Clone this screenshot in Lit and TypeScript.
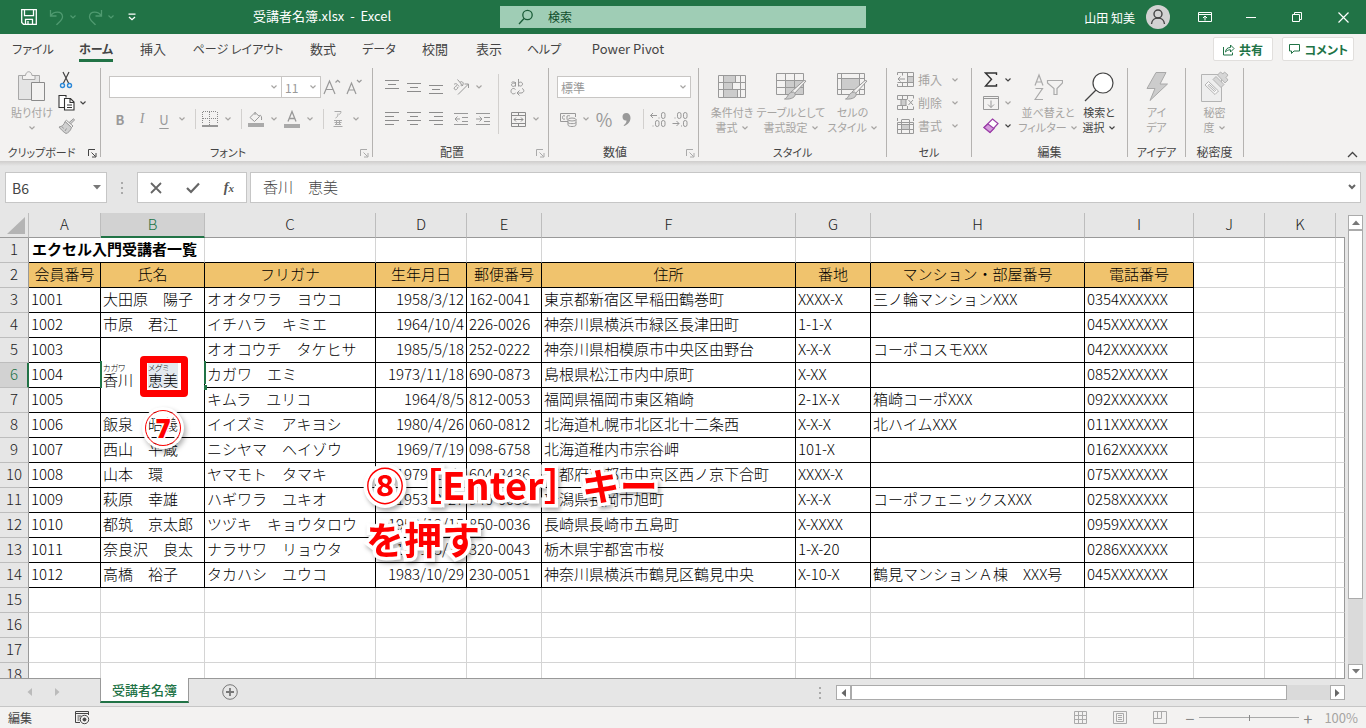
import { LitElement, html, css, nothing } from "lit";
import { customElement, property, state } from "lit/decorators.js";
import { classMap } from "lit/directives/class-map.js";

const icons: Record<string, unknown> = {
  save: html`<svg width="18" height="18" viewBox="0 0 18 18" fill="none" stroke="#fff" stroke-width="1.3"><path d="M1.7 1.7h14.6v14.6H3.5l-1.8-1.8zM4.5 1.7v6h9v-6M5.5 16.300v-5h7v5M8 13v3"/></svg>`,
  undo: html`<svg width="18" height="18" viewBox="0 0 18 18" fill="none" stroke="#4f9a70" stroke-width="1.3"><path d="M2.500 2v6h6M2.700 7.800C5.500 3 14 2.500 14.500 8.500c.3 4-4.500 6-6 8.500"/></svg>`,
  redo: html`<svg width="18" height="18" viewBox="0 0 18 18" fill="none" stroke="#4f9a70" stroke-width="1.3"><path d="M15.500 2v6h-6M15.300 7.800C12.500 3 4 2.500 3.500 8.500c-.3 4 4.500 6 6 8.500"/></svg>`,
  customize: html`<svg width="10" height="8" viewBox="0 0 10 8" fill="none" stroke="#fff" stroke-width="1.3"><path d="M1.500 1.200h7M2 4l3 2.700L8 4"/></svg>`,
  search: html`<svg width="16" height="16" viewBox="0 0 16 16" fill="none" stroke="#1a5c38" stroke-width="1.300"><circle cx="9.500" cy="6" r="4.700"/><path d="M6 9.500L1 15"/></svg>`,
  avatar: html`<svg width="24" height="24" viewBox="0 0 24 24"><circle cx="12" cy="12" r="12" fill="#d2d2d2"/><g fill="none" stroke="#444" stroke-width="1.400"><circle cx="12" cy="9" r="4"/><path d="M5.500 19c.5-8 12.500-8 13 0"/></g></svg>`,
  ribbonMode: html`<svg width="14" height="12" viewBox="0 0 14 12" fill="none" stroke="#fff"><path d="M.5 1.500h13v9H.5zM.5 3.500h13M7 9.500v-4M5 7l2-2 2 2"/></svg>`,
  minimize: html`<svg width="10" height="10" viewBox="0 0 10 10" stroke="#fff"><path d="M0 5.500h10"/></svg>`,
  restore: html`<svg width="10" height="10" viewBox="0 0 10 10" fill="none" stroke="#fff"><path d="M.5 2.500h7v7h-7zM2.500 2.500v-2h7v7h-2"/></svg>`,
  close: html`<svg width="11" height="11" viewBox="0 0 11 11" stroke="#fff" stroke-width="1.200"><path d="M.5.5l10 10M10.500.5l-10 10"/></svg>`,
  share: html`<svg width="13" height="13" viewBox="0 0 13 13" fill="none" stroke="#217346"><path d="M1.500 4v8h9V9.500M3.500 9c.3-3 2-4.500 5-4.500V2l3.500 3.500L8.500 9V6.800C6 6.800 5 7.500 3.500 9z"/></svg>`,
  comment: html`<svg width="13" height="12" viewBox="0 0 13 12" fill="none" stroke="#217346"><path d="M1.500 1.500h10v6.500H6L3.500 10.500V8h-2z"/></svg>`,
  chev: html`<svg width="8" height="6" viewBox="0 0 8 6" fill="none" stroke="currentColor" stroke-width="1.200"><path d="M1.500 1.500L4 4l2.500-2.500"/></svg>`,
  paste: html`<svg width="28" height="32" viewBox="0 0 28 32"><path d="M.5 4.500h21v24H.5z" fill="#e4e4e4" stroke="#a8a8a8"/><path d="M4.500 8.500V4.500h3c.5-5 6-5 6.500 0h3v4z" fill="#f3f2f1" stroke="#a8a8a8"/><path d="M13.500 11.500h13v18h-13z" fill="#f3f2f1" stroke="#8a8a8a"/></svg>`,
  cut: html`<svg width="16" height="18" viewBox="0 0 16 18" fill="none"><path d="M5 1l6 12M11 1L5 13" stroke="#444" stroke-width="1.200"/><circle cx="4.500" cy="14.500" r="2" stroke="#2b88d8" stroke-width="1.400"/><circle cx="11.500" cy="14.500" r="2" stroke="#2b88d8" stroke-width="1.400"/></svg>`,
  copy: html`<svg width="17" height="17" viewBox="0 0 17 17" fill="#fff" stroke="#333" stroke-width="1.100"><path d="M6 13.500H1V1.500h7v2"/><path d="M6.500 4.500h6l3.500 3.500v8H6.500zM12 4.500v4h4M9 11h5M9 13.500h5"/></svg>`,
  painter: html`<svg width="17" height="16" viewBox="0 0 17 16" fill="#d0d0d0" stroke="#999"><path d="M15.500.7l1 1.300-4 4-1.500-1.300z"/><path d="M7 3.500l1.500-1.200 6.500 5.700-1.500 1.500z" fill="#f3f2f1"/><path d="M7 3.500l6.500 6C12.500 13 10 15 8 15.500c-2.500-1.500-5-4-7-6.500 3-.5 5-2 6-5.500z"/><path d="M4 8.500l1.500 2M7 13l1.500-2.500" fill="none"/></svg>`,
  growFont: html`<svg width="18" height="18" viewBox="0 0 18 18" fill="none" stroke="#999" stroke-width="1.200"><path d="M1 16L6.500 3 12 16M3 11.500h7M12.500 4.500l2.200-2.200L17 4.500"/></svg>`,
  shrinkFont: html`<svg width="18" height="18" viewBox="0 0 18 18" fill="none" stroke="#999" stroke-width="1.200"><path d="M2 16L6.500 5 11 16M3.500 12h6M12 2l2.200 2.200L16.500 2"/></svg>`,
  borders: html`<svg width="16" height="16" viewBox="0 0 16 16" fill="none" stroke="#888"><path d="M.5 1v12M15.500 1v12M7.500 1v13M1 .5h14M1 7.500h14" stroke-dasharray="1 1"/><path d="M0 15h16" stroke="#777" stroke-width="1.500"/></svg>`,
  fill: html`<svg width="16" height="16" viewBox="0 0 16 16" fill="none" stroke="#999"><path d="M7 1.500L2 6.500l4.500 4 5-5zM7 1v3M11 5c1.500-1.500 3-.5 2.500 4"/><path d="M0 14h16" stroke="#aaa" stroke-width="4"/></svg>`,
  fontColor: html`<svg width="16" height="18" viewBox="0 0 16 18" fill="none" stroke="#999" stroke-width="1.300"><path d="M4 11.500L8 1.500l4 10M5.500 8.500h5"/><path d="M0 16h16" stroke="#aaa" stroke-width="4"/></svg>`,
  phonetic: html`<svg width="10" height="18" viewBox="0 0 10 18" fill="none" stroke="#aaa"><path d="M1.500 1.500h6.500c0 1.500-.8 2.500-2 3M5 3.500c0 2.500-.5 3.500-2.500 4.500M1 10.500h8M3.500 10.500v4M6.500 10.500v4M1.500 12.500h7M.5 16.500h9M2 14.500h6"/></svg>`,
  wrap: html`<svg width="16" height="18" viewBox="0 0 16 18" fill="none" stroke="#999"><path d="M5.500 4v4.500M5.500 6.500c0 2.500-4 2.500-4 .3s4-2 4-.8c0-2.500-3-2.500-4-1.500M8.500 1v7.500M8.500 6c0-2.500 4-2.500 4 0s-4 3-4 0M5.500 11.500c-2-2-4.500-.8-4.500 1.700s2.500 3.500 4.500 1.800M12 10.500c3 1 2 4.500-1 4.500H7.500M9.500 12.500L7 15l2.500 2.500"/></svg>`,
  orient: html`<svg width="18" height="17" viewBox="0 0 18 17" fill="none" stroke="#999"><path d="M6 15.500L16.500 5M12.500 5h4v4M2 5.500c1.500-1.500 3-1 5 2M5 6.500C3 7.500 1.500 9 2.500 10.200s3 .3 3.500-2.200M5.500.5l5.500 6.500M8 3.500c1.500-2 4 0 3 2s-2 1-2.500.5"/></svg>`,
  outdent: html`<svg width="14" height="14" viewBox="0 0 14 14" fill="none" stroke="#999"><path d="M0 1.500h14M8 5.500h6M8 9.500h6M0 12.500h14M1 7h5M3.500 4.500L1 7l2.500 2.500"/></svg>`,
  indent: html`<svg width="14" height="14" viewBox="0 0 14 14" fill="none" stroke="#999"><path d="M0 1.500h14M8 5.500h6M8 9.500h6M0 12.500h14M0 7h5.500M3.500 4.500L6 7 3.500 9.500"/></svg>`,
  merge: html`<svg width="15" height="15" viewBox="0 0 15 15" fill="none" stroke="#8c8c8c"><path d="M.5.5h14v14H.5zM.5 3.500h14M.5 11.500h14M7.500.5v3M7.500 11.500v3M3 7.500h9M5 5.500l-2 2 2 2M10 5.500l2 2-2 2"/></svg>`,
  currency: html`<svg width="17" height="15" viewBox="0 0 17 15" fill="none" stroke="#999"><path d="M8 9.500H.5v-8h15V5M5 4c-2-.8-2.500 0-2.500 1.500S3 7.500 5 7M7 7.500V4c1-.5 2-.5 3 0"/><ellipse cx="12" cy="7.500" rx="4" ry="1.500" fill="#f3f2f1"/><path d="M8 7.500v5.500c0 2 8 2 8 0V7.500M8 10.500c0 1.500 8 1.500 8 0"/></svg>`,
  comma: html`<svg width="9" height="14" viewBox="0 0 9 14" fill="#999"><path d="M1.500 13.500c2-1.500 3-3 3-5C2 9 .5 7 .5 4.800.5 2.500 2 1 4.300 1 7 1 8.500 3 8.500 6c0 3.500-2.500 6.500-6 8z"/></svg>`,
  incDec: html`<svg width="16" height="17" viewBox="0 0 16 17" fill="none" stroke="#999"><path d="M.5 4.500H7M3 2L.5 4.500 3 7M9 6.500v1"/><rect x="11.500" y="1.500" width="3.500" height="6" rx="1.700"/><rect x="5.500" y="9.500" width="3.500" height="6" rx="1.700"/><rect x="11.500" y="9.500" width="3.500" height="6" rx="1.700"/><path d="M3 14.500v1"/></svg>`,
  decDec: html`<svg width="16" height="17" viewBox="0 0 16 17" fill="none" stroke="#999"><path d="M.5 12.500H7M4.500 10L7 12.500 4.500 15M3 6.500v1M9.500 14.500v1"/><rect x="5.500" y="1.500" width="3.500" height="6" rx="1.700"/><rect x="11.500" y="1.500" width="3.500" height="6" rx="1.700"/><rect x="11.500" y="9.500" width="3.500" height="6" rx="1.700"/></svg>`,
  condFormat: html`<svg width="28" height="23" viewBox="0 0 28 23" fill="none" stroke="#999"><path d="M6 1h12v6H6zM6 8h8v6H6zM6 15h14v7H6z" fill="#ccc" stroke="none"/><path d="M.5.5h27v22H.5zM.5 7.500h27M.5 14.500h27M5.500.5v22M22.500.5v22M17.500.5v7M14.500 7.500v7M19.500 14.500v8"/></svg>`,
  tableFormat: html`<svg width="31" height="28" viewBox="0 0 31 28" fill="none" stroke="#999"><path d="M10 7.500h17v14H10z" fill="#ccc" stroke="none"/><path d="M.5.5h27v21H.5zM.5 7.500h27M.5 14.500h27M9.500.5v21M18.500.5v21"/><path d="M30 8L18 21l-3-2L28 7.500z" fill="#f3f2f1"/><path d="M17.500 19c4 2 1 8-9 7 4-1.500 3-7 9-7z" fill="#ccc"/></svg>`,
  cellStyle: html`<svg width="31" height="28" viewBox="0 0 31 28" fill="none" stroke="#999"><path d="M5 5h18v12H5z" fill="#ccc" stroke="none"/><path d="M.5.5h27v21H.5zM.5 5.500h27M.5 16.500h27M4.500.5v21M22.500.5v21"/><path d="M30 8L18 21l-3-2L28 7.500z" fill="#f3f2f1"/><path d="M17.500 19c4 2 1 8-9 7 4-1.500 3-7 9-7z" fill="#ccc"/></svg>`,
  cellInsert: html`<svg width="17" height="15" viewBox="0 0 17 15" fill="none" stroke="#999"><path d="M11 5h5v5h-5z" fill="#ccc" stroke="none"/><path d="M.5 3V.5h16v14H.5V12M5.500.5v3M10.500.5v14M.5 10.500h16M10.500 4.500h6M5.500 10.500v4M1 7h7M3.500 4.500L1 7l2.500 2.500"/></svg>`,
  cellDelete: html`<svg width="17" height="15" viewBox="0 0 17 15" fill="none" stroke="#999"><path d="M4 4.500h5v6H4z" fill="#ccc"/><path d="M10 4.500H.5v-4h16v3M5.500.5v4M10.500.5v4M.5 10.500h9M.5 10.500v4h16v-3M5.500 10.500v4M10.500 11v3.500M11.500 5l4.500 5M16 5l-4.500 5"/></svg>`,
  cellFormat: html`<svg width="17" height="16" viewBox="0 0 17 16" fill="none" stroke="#999"><path d="M5 6h7v5H5z" fill="#ccc" stroke="none"/><path d="M.5 4.500h16v11H.5zM4.500 2v13.500M12.500 2v13.500M4.500 1.500h8M.5 6.500h16M.5 11.500h16M.5 0v3M16.500 0v3"/></svg>`,
  sigma: html`<svg width="14" height="15" viewBox="0 0 14 15" fill="none" stroke="#333" stroke-width="1.400"><path d="M12.500 3V1H1.500L7.500 7.300 1.500 14h11v-2"/></svg>`,
  fillDown: html`<svg width="16" height="14" viewBox="0 0 16 14" fill="none" stroke="#999"><path d="M.5.5h15v13H.5zM.5 2.500h15M8 4.500v7M5 8.500l3 3 3-3"/></svg>`,
  eraser: html`<svg width="16" height="16" viewBox="0 0 16 16" stroke="#9b3fa8" stroke-width="1.200"><path d="M9.500 1l5.500 4.500L7 14.500 1 9.500z" fill="#fff"/><path d="M5 6l6 4.500-4 4-6-5z" fill="#d59bdc"/></svg>`,
  sort: html`<svg width="29" height="28" viewBox="0 0 29 28" fill="none" stroke="#aaa" stroke-width="1.200"><path d="M1 12.500L5 2l4 10.500M2.500 9h5M1.500 15.500h7L1 26.500h8M13.500 7.500h15v2.500l-5.500 5.500V21.500h-3v-6L13.500 10z"/></svg>`,
  find: html`<svg width="30" height="30" viewBox="0 0 30 30" stroke="#444" stroke-width="1.200"><circle cx="19" cy="11" r="10" fill="#fff"/><path d="M12 18L1 29"/></svg>`,
  bolt: html`<svg width="22" height="29" viewBox="0 0 22 29" fill="#ccc" stroke="#a8a8a8"><path d="M10 .5h10L14 12h7.500L4 28.500 9 16.500H1z"/></svg>`,
  secret: html`<svg width="28" height="31" viewBox="0 0 28 31" fill="#eee" stroke="#b4b4b4"><path d="M.5 3.500h20v27H.5z"/><path d="M4 14l3.500-3.500 10 9.500-3.500 3.500zM7 14.500l6.500 6 1.200-1.200-6.500-6z" fill="#f8f8f8"/><path d="M12 8.500l3-3 8 8-3 3zM16.500 4l3-3 2.500 2 1.500-2 3.500 3-2 2.500 2 2.500-3 3z" fill="#d6d6d6"/></svg>`,
  launcher: html`<svg width="9" height="9" viewBox="0 0 9 9" fill="none" stroke="currentColor"><path d="M.5 7V.5H7M3.500 3.500l4 4M8 4v4H4"/></svg>`,
  collapse: html`<svg width="11" height="7" viewBox="0 0 11 7" fill="none" stroke="#444" stroke-width="1.300"><path d="M1 6l4.500-4.500L10 6"/></svg>`,
  cancel: html`<svg width="12" height="12" viewBox="0 0 12 12" stroke="#666" stroke-width="1.800"><path d="M1 1l10 10M11 1L1 11"/></svg>`,
  enter: html`<svg width="14" height="12" viewBox="0 0 14 12" fill="none" stroke="#666" stroke-width="2.200"><path d="M1 6l4 4 8-8.500"/></svg>`,
  down: html`<svg width="8" height="5" viewBox="0 0 8 5" fill="#777"><path d="M0 0h8L4 4.500z"/></svg>`,
  up: html`<svg width="8" height="5" viewBox="0 0 8 5" fill="#777"><path d="M0 5h8L4 .5z"/></svg>`,
  left: html`<svg width="5" height="8" viewBox="0 0 5 8" fill="currentColor"><path d="M5 0v8L.5 4z"/></svg>`,
  right: html`<svg width="5" height="8" viewBox="0 0 5 8" fill="currentColor"><path d="M0 0v8l4.500-4z"/></svg>`,
  expand: html`<svg width="8" height="6" viewBox="0 0 8 6" fill="none" stroke="#666" stroke-width="2"><path d="M1 1l3 3 3-3"/></svg>`,
  dots: html`<svg width="2" height="12" viewBox="0 0 2 12" fill="#aaa"><path d="M0 0h2v2H0zM0 5h2v2H0zM0 10h2v2H0z"/></svg>`,
  plus: html`<svg width="16" height="16" viewBox="0 0 16 16" fill="none" stroke="#777"><circle cx="8" cy="8" r="7.300"/><path d="M4 8h8M8 4v8" stroke-width="1.800"/></svg>`,
  macro: html`<svg width="15" height="14" viewBox="0 0 15 14" fill="none" stroke="#444"><path d="M5 11.500H.5V.5h13V4M.5 2.500h13M2.500 5h4M2.500 7h2M2.500 9h2"/><circle cx="9.500" cy="8.500" r="4.200"/><circle cx="9.500" cy="8.500" r="1.500" fill="#444"/></svg>`,
  viewNormal: html`<svg width="13" height="13" viewBox="0 0 13 13" fill="none" stroke="#aaa"><path d="M.5.5h12v12H.5zM.5 4.500h12M.5 8.500h12M4.500.5v12M8.500.5v12"/></svg>`,
  viewPage: html`<svg width="14" height="13" viewBox="0 0 14 13" fill="none" stroke="#aaa"><path d="M.5.5h13v12H.5zM3.500 2.500h7v8h-7zM5 4.500h4M5 6.500h4M5 8.500h4"/></svg>`,
  viewBreak: html`<svg width="14" height="13" viewBox="0 0 14 13" fill="none" stroke="#aaa"><path d="M.5.5h13v12H.5zM.5 7.500h8V.5M4.500.5v7"/></svg>`,
};

const alignIcon = (rows: [number, number][], top: number) => html`<svg width="14" height="14" viewBox="0 0 14 14" stroke="#8c8c8c">
  ${rows.map(([x, w], i) => html`<svg><path d="M${x} ${top + i * 4 + 0.5}h${w}"/></svg>`)}
</svg>`;

const F: [number, number] = [0, 14];
const alignTop = alignIcon([F, [3, 8], F], 0);
const alignMiddle = alignIcon([F, [3, 8], F], 3);
const alignBottom = alignIcon([F, [3, 8], F], 5);
const alignLeft = alignIcon([F, [0, 9], F, [0, 9]], 0);
const alignCenter = alignIcon([F, [3, 8], F, [3, 8]], 0);
const alignRight = alignIcon([F, [5, 9], F, [5, 9]], 0);

const isKana = (s: string) => /^[\u30a0-\u30ff ]+$/.test(s);

const tool = (icon: unknown, label: string) => html`<button class="tool" aria-label=${label}>${icon}</button>`;
const drop = (label: string, dark = false) =>
  html`<button class=${classMap({ drop: true, dark })} aria-label=${`${label}のオプション`}>${icons.chev}</button>`;
const big = (icon: string, lines: string[], o: { chev?: boolean; below?: boolean; dark?: boolean } = {}) => html`
  <button class=${classMap({ big: true, dark: !!o.dark })}>
    <span class="pic">${icons[icon]}</span>
    ${lines.map((l, i) => html`<span class="line">${l}${o.chev && i === lines.length - 1 ? icons.chev : nothing}</span>`)}
    ${o.below ? html`<span class="line tip">${icons.chev}</span>` : nothing}
  </button>`;

const group = (name: string, cls: string, body: unknown, launcher = "") => html`
  <section class="group ${cls}" aria-label=${name}>
    <div class="body">${body}</div>
    <div class="caption">
      <span class=${classMap({ kana: isKana(name) })}>${name}</span>
      ${launcher ? html`<button class="launch ${launcher}" aria-label="${name}の設定">${icons.launcher}</button>` : nothing}
    </div>
  </section>
  <i class="rule"></i>`;

@customElement("excel-title-bar")
class TitleBar extends LitElement {
  static styles = css`
    :host { display: grid; grid-template-columns: 500fr 366fr 500fr; align-items: center; height: 34px; background: #217346; color: #fff; font-size: 12px; }
    .left, .right { display: flex; align-items: center; }
    .quick { display: flex; align-items: center; padding-left: 18px; width: 253px; box-sizing: border-box; }
    button { border: 0; padding: 0; background: none; color: inherit; font: inherit; display: flex; align-items: center; justify-content: center; height: 24px; }
    .ic { width: 22px; }
    .chev { width: 10px; color: #4f9a70; }
    .gap { margin-left: 6px; }
    .more { width: 20px; }
    h1 { margin: 0; padding-bottom: 3px; font-size: 13px; font-weight: 400; white-space: pre; }
    label { display: flex; align-items: center; gap: 14px; height: 22px; padding-left: 18px; background: #9fcdb5; }
    input { flex: 1; min-width: 0; border: 0; padding: 0 0 2px; background: none; font: inherit; color: #0f4d2b; outline: none; }
    input::placeholder { color: #0f4d2b; opacity: 1; }
    .right { justify-content: flex-end; }
    .user { gap: 11px; margin-right: 12px; }
    .win { width: 46px; height: 34px; }
  `;
  render() {
    return html`
      <div class="left">
        <div class="quick">
          <button class="ic" aria-label="上書き保存">${icons.save}</button>
          <button class="ic gap" aria-label="元に戻す">${icons.undo}</button>
          <button class="chev" aria-label="元に戻す履歴">${icons.chev}</button>
          <button class="ic gap" aria-label="やり直し">${icons.redo}</button>
          <button class="chev" aria-label="やり直し履歴">${icons.chev}</button>
          <button class="more gap" aria-label="カスタマイズ">${icons.customize}</button>
        </div>
        <h1>受講者名簿.xlsx  -  Excel</h1>
      </div>
      <label>${icons.search}<input type="text" placeholder="検索" aria-label="検索" /></label>
      <div class="right">
        <button class="user">山田 知美 ${icons.avatar}</button>
        <button class="win" aria-label="リボンの表示オプション">${icons.ribbonMode}</button>
        <button class="win" aria-label="最小化">${icons.minimize}</button>
        <button class="win" aria-label="元のサイズ">${icons.restore}</button>
        <button class="win" aria-label="閉じる">${icons.close}</button>
      </div>`;
  }
}

@customElement("excel-ribbon")
class Ribbon extends LitElement {
  @state() private active = "ホーム";

  static styles = css`
    :host { display: block; background: #f3f2f1; color: #444; font-size: 12px; font-feature-settings: "palt"; }
    button { border: 0; padding: 0; background: none; font: inherit; color: inherit; white-space: nowrap; }
    .bar { display: flex; justify-content: space-between; height: 32px; }
    .tabs { display: grid; grid-template-columns: 66px 60px 54px 116px 54px 58px 54px 54px 56px 112px; }
    .tab { font-size: 13px; display: flex; justify-content: center; padding-top: 5px; }
    .tab.kana { font-size: 12px; }
    .tab span { line-height: 20px; border-bottom: 3px solid transparent; height: 20px; }
    .tab.on span { font-weight: 700; border-color: #217346; }
    .acts { display: flex; gap: 9px; padding: 3px 12px 0 0; }
    .act { display: flex; align-items: center; justify-content: center; gap: 4px; height: 24px; min-width: 60px; padding: 0 5px; background: #fff; border: 1px solid #e1dfdd; border-radius: 2px; color: #217346; font-weight: 700; font-size: 12px; }
    .groups { display: flex; align-items: flex-start; height: 95px; padding-top: 2px; box-sizing: border-box; }
    .rule { width: 1px; height: 89px; background: #b5b3b1; flex: none; }
    .group { display: flex; flex-direction: column; flex: none; box-sizing: border-box; }
    .body { display: flex; height: 76px; color: #a6a4a2; }
    .caption { position: relative; height: 16px; line-height: 16px; text-align: center; }
    .caption .kana { font-size: 11px; }
    .launch { position: absolute; right: 2px; top: 4px; display: flex; padding: 1px; }
    .launch.dim { color: #aaa; }
    .clip { width: 100px; }
    .font { width: 271px; }
    .place { width: 175px; }
    .num { width: 149px; }
    .clip .caption, .font .caption, .place .caption, .num .caption { padding-right: 17px; }
    .style { width: 187px; }
    .cell { width: 84px; }
    .edit { width: 155px; }
    .idea { width: 57px; }
    .rows { display: flex; flex-direction: column; gap: 10px; padding: 8px 0 0 8px; }
    .row, .mini { display: flex; align-items: center; }
    .row { height: 22px; }
    .stack { display: flex; flex-direction: column; }
    .mini { height: 23px; gap: 3px; }
    .mini .tool { width: 20px; }
    .tool { width: 22px; height: 22px; display: flex; align-items: center; justify-content: center; color: #999; }
    .drop { width: 14px; height: 22px; display: flex; align-items: center; justify-content: center; color: #a6a4a2; }
    .dark { color: #444; }
    .sep { width: 1px; height: 20px; margin: 0 3px 0 6px; background: #d2d0ce; }
    .tall { width: 1px; height: 60px; margin: 6px 0 0 4px; background: #d2d0ce; }
    .off { margin-left: 3px; }
    .pick { display: grid; align-items: center; }
    .pick > * { grid-area: 1 / 1; }
    .pick svg { justify-self: end; margin-right: 4px; pointer-events: none; }
    select { appearance: none; width: 100%; height: 22px; border: 1px solid #c8c6c4; border-radius: 0; background: #fff; padding: 0 3px; color: #999; font: inherit; font-size: 12px; opacity: 1; }
    .face { width: 173px; }
    .size { width: 40px; margin-left: -1px; }
    .fmt { width: 134px; }
    .bold { font-weight: 700; font-size: 13px; }
    .ital { font: italic 14px "Liberation Serif", serif; }
    .under { font-size: 13px; text-decoration: underline; text-underline-offset: 3px; }
    .glyph { font-size: 18px; }
    .big { display: flex; flex-direction: column; align-items: center; height: 68px; font-size: 11px; }
    .pic { height: 37px; display: flex; align-items: center; justify-content: center; flex: none; }
    .line { line-height: 15px; display: flex; align-items: center; gap: 3px; }
    .tip { height: 15px; }
    .clip .big { width: 48px; margin-left: 8px; }
    .clip .stack { width: 42px; }
    .clip .mini { gap: 0; }
    .style .body { padding-left: 7px; display: grid; grid-template-columns: 52px 66px 57px; }
    .cell .body { padding-left: 8px; }
    .cell .mini .drop { margin-left: 3px; }
    .edit .stack { width: 47px; padding-left: 9px; box-sizing: border-box; }
    .edit .mini { gap: 0; }
    .edit .body { display: grid; grid-template-columns: 47px 58px 44px; }
    .idea .body { justify-content: center; }
    .fold { margin: 83px 8px 0 auto; display: flex; }
    .shade { height: 5px; background: linear-gradient(#cfcdcc, #e6e6e6); }
  `;

  render() {
    const tabs = ["ファイル", "ホーム", "挿入", "ページ レイアウト", "数式", "データ", "校閲", "表示", "ヘルプ", "Power Pivot"];
    const cellRow = (icon: string, name: string) => html`<div class="mini">${tool(icons[icon], name)}<span>${name}</span>${drop(name)}</div>`;
    return html`
      <nav class="bar">
        <div class="tabs">
          ${tabs.map((t) => html`<button class=${classMap({ tab: true, kana: isKana(t), on: t === this.active })} @click=${() => (this.active = t)}><span>${t}</span></button>`)}
        </div>
        <div class="acts">
          <button class="act">${icons.share}共有</button>
          <button class="act">${icons.comment}コメント</button>
        </div>
      </nav>
      <div class="groups">
        ${group("クリップボード", "clip", html`
          ${big("paste", ["貼り付け"], { below: true })}
          <div class="stack">
            <div class="mini">${tool(icons.cut, "切り取り")}</div>
            <div class="mini">${tool(icons.copy, "コピー")}${drop("コピー", true)}</div>
            <div class="mini">${tool(icons.painter, "書式のコピー")}</div>
          </div>`, "lit")}
        ${group("フォント", "font", html`
          <div class="rows">
            <div class="row">
              <div class="pick face"><select aria-label="フォント名"><option></option></select>${icons.chev}</div>
              <div class="pick size"><select aria-label="フォント サイズ"><option>11</option></select>${icons.chev}</div>
              ${tool(icons.growFont, "フォント サイズの拡大")}${tool(icons.shrinkFont, "フォント サイズの縮小")}
            </div>
            <div class="row">
              <button class="tool bold">B</button><button class="tool ital">I</button><button class="tool under">U</button>${drop("下線")}
              <i class="sep"></i>${tool(icons.borders, "罫線")}${drop("罫線")}
              <i class="sep"></i>${tool(icons.fill, "塗りつぶし")}${drop("塗りつぶし")}${tool(icons.fontColor, "フォントの色")}${drop("フォントの色")}
              <i class="sep"></i>${tool(icons.phonetic, "ふりがな")}${drop("ふりがな")}
            </div>
          </div>`, "dim")}
        ${group("配置", "place", html`
          <div class="rows">
            <div class="row">${tool(alignTop, "上揃え")}${tool(alignMiddle, "上下中央")}${tool(alignBottom, "下揃え")}<span class="off">${tool(icons.orient, "方向")}</span>${drop("方向")}</div>
            <div class="row">${tool(alignLeft, "左揃え")}${tool(alignCenter, "中央揃え")}${tool(alignRight, "右揃え")}<span class="off">${tool(icons.outdent, "インデントを減らす")}</span>${tool(icons.indent, "インデントを増やす")}</div>
          </div>
          <i class="tall"></i>
          <div class="rows">
            <div class="row">${tool(icons.wrap, "折り返し")}</div>
            <div class="row">${tool(icons.merge, "セルの結合")}${drop("セルの結合")}</div>
          </div>`, "dim")}
        ${group("数値", "num", html`
          <div class="rows">
            <div class="row"><div class="pick fmt"><select aria-label="表示形式"><option>標準</option></select>${icons.chev}</div></div>
            <div class="row">${tool(icons.currency, "通貨")}${drop("通貨")}<button class="tool glyph">%</button>${tool(icons.comma, "桁区切り")}<i class="sep"></i>${tool(icons.incDec, "小数点以下を増やす")}${tool(icons.decDec, "小数点以下を減らす")}</div>
          </div>`, "dim")}
        ${group("スタイル", "style", html`
          ${big("condFormat", ["条件付き", "書式"], { chev: true })}
          ${big("tableFormat", ["テーブルとして", "書式設定"], { chev: true })}
          ${big("cellStyle", ["セルの", "スタイル"], { chev: true })}`)}
        ${group("セル", "cell", html`
          <div class="stack">${cellRow("cellInsert", "挿入")}${cellRow("cellDelete", "削除")}${cellRow("cellFormat", "書式")}</div>`)}
        ${group("編集", "edit", html`
          <div class="stack">
            <div class="mini">${tool(icons.sigma, "合計")}${drop("合計", true)}</div>
            <div class="mini">${tool(icons.fillDown, "フィル")}${drop("フィル")}</div>
            <div class="mini">${tool(icons.eraser, "クリア")}${drop("クリア", true)}</div>
          </div>
          ${big("sort", ["並べ替えと", "フィルター"], { chev: true })}
          ${big("find", ["検索と", "選択"], { chev: true, dark: true })}`)}
        ${group("アイデア", "idea", big("bolt", ["アイ", "デア"]))}
        ${group("秘密度", "idea", big("secret", ["秘密", "度"], { chev: true }))}
        <button class="fold" aria-label="リボンを折りたたむ">${icons.collapse}</button>
      </div>
      <div class="shade"></div>`;
  }
}

@customElement("excel-formula-bar")
class FormulaBar extends LitElement {
  @property() cell = "";
  @property() value = "";
  static styles = css`
    :host { display: flex; padding: 6px 5px 10px; height: 31px; background: #e6e6e6; }
    .box { display: flex; align-items: center; background: #fff; border: 1px solid #c6c6c6; box-sizing: border-box; }
    .name { width: 102px; padding: 0 5px 0 6px; }
    input { border: 0; padding: 0; background: none; outline: none; min-width: 0; flex: 1; font: inherit; color: #444; }
    .name input { font-size: 14px; }
    .grip { width: 30px; display: flex; align-items: center; justify-content: center; }
    .acts { width: 110px; justify-content: space-around; }
    button { border: 0; padding: 0; background: none; display: flex; color: #555; }
    .fx { font: italic 700 14px/20px "Liberation Serif", serif; }
    .fx small { font-size: 11px; }
    .text { flex: 1; margin-left: 3px; padding: 0 4px 2px 12px; }
    .text input { font-size: 15px; font-weight: 300; }
  `;
  render() {
    return html`
      <div class="box name"><input aria-label="名前ボックス" .value=${this.cell} />${icons.down}</div>
      <div class="grip">${icons.dots}</div>
      <div class="box acts">
        <button aria-label="キャンセル">${icons.cancel}</button>
        <button aria-label="入力">${icons.enter}</button>
        <button class="fx" aria-label="関数の挿入">f<small>x</small></button>
      </div>
      <div class="box text"><input aria-label="数式バー" .value=${this.value} /><button aria-label="数式バーの展開">${icons.expand}</button></div>`;
  }
}

const columns: [string, number][] = [["A", 72], ["B", 104], ["C", 171], ["D", 91], ["E", 75], ["F", 254], ["G", 75], ["H", 214], ["I", 109], ["J", 71], ["K", 71]];
const headings = ["会員番号", "氏名", "フリガナ", "生年月日", "郵便番号", "住所", "番地", "マンション・部屋番号", "電話番号"];
const members: string[][] = [
  ["1001", "大田原　陽子", "オオタワラ　ヨウコ", "1958/3/12", "162-0041", "東京都新宿区早稲田鶴巻町", "XXXX-X", "三ノ輪マンションXXX", "0354XXXXXX"],
  ["1002", "市原　君江", "イチハラ　キミエ", "1964/10/4", "226-0026", "神奈川県横浜市緑区長津田町", "1-1-X", "", "045XXXXXXX"],
  ["1003", "", "オオコウチ　タケヒサ", "1985/5/18", "252-0222", "神奈川県相模原市中央区由野台", "X-X-X", "コーポコスモXXX", "042XXXXXXX"],
  ["1004", "", "カガワ　エミ", "1973/11/18", "690-0873", "島根県松江市内中原町", "X-XX", "", "0852XXXXXX"],
  ["1005", "", "キムラ　ユリコ", "1964/8/5", "812-0053", "福岡県福岡市東区箱崎", "2-1X-X", "箱崎コーポXXX", "092XXXXXXX"],
  ["1006", "飯泉　昭義", "イイズミ　アキヨシ", "1980/4/26", "060-0812", "北海道札幌市北区北十二条西", "X-X-X", "北ハイムXXX", "011XXXXXXX"],
  ["1007", "西山　平蔵", "ニシヤマ　ヘイゾウ", "1969/7/19", "098-6758", "北海道稚内市宗谷岬", "101-X", "", "0162XXXXXX"],
  ["1008", "山本　環", "ヤマモト　タマキ", "1979/11/1", "604-8436", "京都府京都市中京区西ノ京下合町", "XXXX-X", "", "075XXXXXXX"],
  ["1009", "萩原　幸雄", "ハギワラ　ユキオ", "1953/2/27", "940-0035", "新潟県長岡市旭町", "X-X-X", "コーポフェニックスXXX", "0258XXXXXX"],
  ["1010", "都筑　京太郎", "ツヅキ　キョウタロウ", "1952/12/15", "850-0036", "長崎県長崎市五島町", "X-XXXX", "", "0959XXXXXX"],
  ["1011", "奈良沢　良太", "ナラサワ　リョウタ", "1971/5/14", "320-0043", "栃木県宇都宮市桜", "1-X-20", "", "0286XXXXXX"],
  ["1012", "高橋　裕子", "タカハシ　ユウコ", "1983/10/29", "230-0051", "神奈川県横浜市鶴見区鶴見中央", "X-10-X", "鶴見マンションＡ棟　XXX号", "045XXXXXXX"],
];

@customElement("excel-sheet")
class Sheet extends LitElement {
  static styles = css`
    :host { display: flex; flex: 1; min-height: 0; background: #e6e6e6; }
    .view { position: relative; flex: 1; min-width: 0; overflow: hidden; border-bottom: 1px solid #999; }
    table { table-layout: fixed; width: 100%; border-collapse: separate; border-spacing: 0; font-size: 15px; color: #000; font-weight: 300; }
    th, td { box-sizing: border-box; height: 25px; line-height: 22px; padding: 0 2px 2px; border: 0 solid #d4d4d4; border-width: 0 1px 1px 0; white-space: nowrap; overflow: hidden; }
    td { background: #fff; text-align: left; }
    th { font-weight: 300; text-align: center; background: #e6e6e6; color: #222; }
    thead th { border-right-color: #bdbdbd; border-bottom-color: #999; }
    thead th:last-child { border-right: 0; }
    tbody th { border-right-color: #999; border-bottom-color: #bdbdbd; }
    tbody td:last-child { border-right-color: #999; }
    thead .corner { padding: 0 3px 3px 0; line-height: 0; text-align: right; vertical-align: bottom; }
    thead .sel { background: #d2d2d2; color: #217346; border-bottom: 2px solid #217346; padding-bottom: 1px; }
    tbody .sel { background: #d2d2d2; color: #217346; border-right: 2px solid #217346; padding-right: 1px; }
    .title { font-weight: 700; padding-left: 3px; border-bottom-color: #000; }
    .under { border-bottom-color: #000; }
    .data { border-color: #000; }
    .head { background: #f0c36d; text-align: center; }
    .date { text-align: right; }
    .editing { position: relative; overflow: visible; }
    .edit { display: flex; gap: 15px; padding-top: 2px; }
    .part { display: flex; flex-direction: column; }
    .part rt { display: block; font-size: 8px; line-height: 9px; font-feature-settings: "palt"; }
    .part ruby { display: flex; flex-direction: column-reverse; line-height: 16px; }
    .part.mark { background: #e3e9ef; }
    .edge { position: absolute; width: 2px; top: 23px; height: 27px; background: #217346; }
    .edge.w { left: -1px; }
    .edge.e { right: -2px; height: 23px; }
    .knob { position: absolute; right: -3px; top: 47px; width: 3px; height: 5px; background: #217346; }
    .scroll { width: 21px; padding: 2px 3px 0; box-sizing: border-box; display: flex; flex-direction: column; }
    button { box-sizing: border-box; width: 15px; height: 15px; border: 1px solid #ababab; padding: 0; background: #fff; display: flex; align-items: center; justify-content: center; flex: none; }
    .track { flex: 1; background: #dadada; }
    .thumb { box-sizing: border-box; height: 85%; border: 1px solid #ababab; background: #fff; }
  `;

  private cell(row: string[], r: number, c: number) {
    if (c === 1 && (r === 3 || r === 4)) return nothing;
    if (c === 1 && r === 2)
      return html`<td class="data editing" rowspan="3">
        <div class="edit">
          <span class="part"><ruby>香川<rt>カガワ</rt></ruby></span>
          <span class="part mark"><ruby>恵美<rt>メグミ</rt></ruby></span>
        </div>
        <i class="edge w"></i><i class="edge e"></i><i class="knob"></i>
      </td>`;
    return html`<td class=${classMap({ data: true, date: c === 3 })}>${row[c]}</td>`;
  }

  render() {
    const blanks = html`<td></td><td></td><td></td>`;
    return html`
      <div class="view">
        <table>
          <colgroup>
            <col width="29" />${columns.map(([, w]) => html`<col width=${w} />`)}<col />
          </colgroup>
          <thead>
            <tr>
              <th class="corner"><svg width="18" height="17" viewBox="0 0 18 17"><path d="M18 0v17H0z" fill="#b4b4b4" /></svg></th>
              ${columns.map(([n]) => html`<th scope="col" class=${classMap({ sel: n === "B" })}>${n}</th>`)}<th></th>
            </tr>
          </thead>
          <tbody>
            <tr><th scope="row">1</th><td class="title" colspan="2">エクセル入門受講者一覧</td>${columns.slice(2, 9).map(() => html`<td class="under"></td>`)}${blanks}</tr>
            <tr><th scope="row">2</th>${headings.map((h) => html`<td class="data head">${h}</td>`)}${blanks}</tr>
            ${members.map((m, r) => html`<tr><th scope="row" class=${classMap({ sel: r === 3 })}>${r + 3}</th>${m.map((_, c) => this.cell(m, r, c))}${blanks}</tr>`)}
            ${[15, 16, 17, 18].map((n) => html`<tr><th scope="row">${n}</th>${columns.map(() => html`<td></td>`)}<td></td></tr>`)}
          </tbody>
        </table>
      </div>
      <div class="scroll">
        <button aria-label="上へ">${icons.up}</button>
        <div class="track"><div class="thumb"></div></div>
        <button aria-label="下へ">${icons.down}</button>
      </div>`;
  }
}

@customElement("excel-footer")
class Footer extends LitElement {
  static styles = css`
    :host { display: block; font-size: 12px; color: #444; }
    button { border: 0; padding: 0; background: none; font: inherit; display: flex; align-items: center; justify-content: center; }
    .sheets { display: flex; align-items: flex-start; height: 27px; background: #e6e6e6; }
    .nav { display: flex; width: 100px; height: 26px; padding-left: 15px; box-sizing: border-box; color: #bbb; }
    .nav button { width: 28px; color: inherit; }
    .tab { position: relative; margin-top: -1px; height: 25px; padding: 0 11px; background: #fff; border: 1px solid #999; border-width: 0 1px 0 1px; border-bottom: 2px solid #217346; color: #217346; font-size: 13px; font-weight: 500; }
    .add { margin-left: 33px; height: 26px; }
    .hscroll { margin: 6px 21px 0 auto; display: flex; width: 526px; height: 15px; }
    .grip { display: flex; align-items: center; width: 17px; }
    .arrow { box-sizing: border-box; width: 15px; height: 15px; border: 1px solid #ababab; background: #fff; color: #666; flex: none; }
    .track { flex: 1; background: #dadada; }
    .thumb { box-sizing: border-box; width: 91%; height: 15px; border: 1px solid #ababab; background: #fff; }
    .status { display: flex; align-items: center; height: 21px; padding: 0 8px; border-top: 1px solid #c6c6c6; background: #f3f2f1; }
    .macro { margin-left: 43px; }
    .views { display: flex; gap: 26px; margin-left: auto; }
    .zoom { display: flex; align-items: center; margin-left: 18px; color: #a6a4a2; }
    .zoom output { width: 34px; margin-left: 11px; text-align: right; font-size: 13px; color: #a6a4a2; }
    .step { width: 10px; height: 16px; color: #888; font-size: 16px; }
    input { appearance: none; width: 100px; height: 12px; margin: 0 4px; background: linear-gradient(#aaa, #aaa) center / 100% 1px no-repeat; }
    input::-webkit-slider-thumb { appearance: none; width: 1px; height: 6px; background: #888; }
  `;
  render() {
    return html`
      <div class="sheets">
        <div class="nav"><button aria-label="前のシート">${icons.left}</button><button aria-label="次のシート">${icons.right}</button></div>
        <button class="tab">受講者名簿</button>
        <button class="add" aria-label="新しいシート">${icons.plus}</button>
        <div class="hscroll">
          <span class="grip">${icons.dots}</span>
          <button class="arrow" aria-label="左へ">${icons.left}</button>
          <div class="track"><div class="thumb"></div></div>
          <button class="arrow" aria-label="右へ">${icons.right}</button>
        </div>
      </div>
      <div class="status">
        <span>編集</span>
        <button class="macro" aria-label="マクロの記録">${icons.macro}</button>
        <div class="views">
          <button aria-label="標準">${icons.viewNormal}</button>
          <button aria-label="ページ レイアウト">${icons.viewPage}</button>
          <button aria-label="改ページ プレビュー">${icons.viewBreak}</button>
        </div>
        <div class="zoom">
          <button class="step" aria-label="縮小">−</button>
          <input type="range" aria-label="ズーム" min="0" max="200" value="100" />
          <button class="step" aria-label="拡大">+</button>
          <output>100%</output>
        </div>
      </div>`;
  }
}

@customElement("app-root")
class AppRoot extends LitElement {
  static styles = css`
    :host { display: flex; flex-direction: column; position: relative; height: 100vh; overflow: hidden; font-family: "Noto Sans CJK JP", "Noto Sans", sans-serif; background: #e6e6e6; }
    .frame { position: absolute; left: 140px; top: 356px; width: 48px; height: 41px; box-sizing: border-box; border: 7px solid #f00; border-radius: 4px; }
    .seven { position: absolute; left: 145px; top: 410px; width: 36px; height: 36px; box-sizing: border-box; border: 1px solid #f00; border-radius: 50%; box-shadow: 0 0 0 3px #fff, inset 0 0 0 2px #fff, 2px 3px 5px 3px rgba(0, 0, 0, 0.3); display: flex; align-items: center; justify-content: center; font: 900 26px/30px "Noto Sans", sans-serif; color: #f00; -webkit-text-stroke: 3px #fff; paint-order: stroke fill; }
    .note { position: absolute; left: 366px; top: 457px; margin: 0; font-size: 38px; line-height: 54px; font-weight: 700; color: #f00; -webkit-text-stroke: 7px #fff; paint-order: stroke fill; filter: drop-shadow(2px 3px 2px rgba(0, 0, 0, 0.3)); white-space: nowrap; }
  `;
  render() {
    return html`
      <excel-title-bar></excel-title-bar>
      <excel-ribbon></excel-ribbon>
      <excel-formula-bar cell="B6" value="香川　恵美"></excel-formula-bar>
      <excel-sheet></excel-sheet>
      <excel-footer></excel-footer>
      <div class="frame"></div>
      <div class="seven">7</div>
      <p class="note">⑧［Enter］キー<br />を押す</p>`;
  }
}
